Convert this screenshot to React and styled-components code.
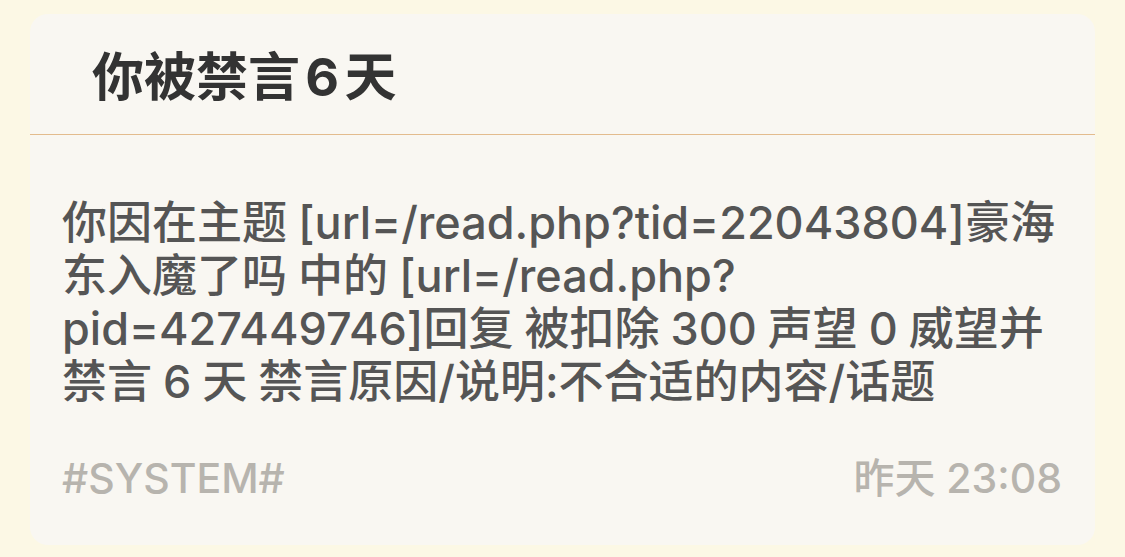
import React from "react";
import styled, { createGlobalStyle } from "styled-components";

const Global = createGlobalStyle`
  html, body { margin: 0; padding: 0; background: #fcf8e5; }
  body {
    font-family: Inter, "Noto Sans CJK SC", "Noto Sans", sans-serif;
    -webkit-font-smoothing: antialiased;
  }
`;

const Page = styled.div`
  width: 1125px;
  height: 557px;
  box-sizing: border-box;
  padding: 14px 30px 12px;
  background: #fcf8e5;
`;

const Card = styled.div`
  height: 100%;
  box-sizing: border-box;
  background: #f9f7f2;
  border-radius: 18px;
  display: flex;
  flex-direction: column;
  overflow: hidden;
`;

const Header = styled.div`
  height: 121px;
  box-sizing: border-box;
  display: flex;
  align-items: center;
  padding: 0 0 2px 62px;
  border-bottom: 1px solid #e3bc8e;
`;

const Title = styled.h1`
  margin: 0;
  font-size: 52px;
  font-weight: 700;
  color: #333333;
  word-spacing: -7px;
`;

const Body = styled.p`
  margin: 0;
  padding: 61px 32px 0;
  font-size: 45px;
  font-weight: 500;
  line-height: 53px;
  color: #555555;
  white-space: nowrap;
  word-spacing: -1px;
`;

const Footer = styled.div`
  margin-top: auto;
  padding: 0 33px 43px 32px;
  display: flex;
  justify-content: space-between;
  align-items: center;
  font-size: 41px;
  line-height: 48px;
  color: #b7b4ae;
`;

const Meta = styled.span`
  font-weight: 500;
`;

export default function App() {
  return (
    <>
      <Global />
      <Page>
        <Card>
          <Header>
            <Title>你被禁言 6 天</Title>
          </Header>
          <Body>
            你因在主题 [url=/read.php?tid=22043804]豪海
            <br />
            东入魔了吗 中的 [url=/read.php?
            <br />
            pid=427449746]回复 被扣除 300 声望 0 威望并
            <br />
            禁言 6 天 禁言原因/说明:不合适的内容/话题
          </Body>
          <Footer>
            <Meta>#SYSTEM#</Meta>
            <Meta>昨天 23:08</Meta>
          </Footer>
        </Card>
      </Page>
    </>
  );
}
